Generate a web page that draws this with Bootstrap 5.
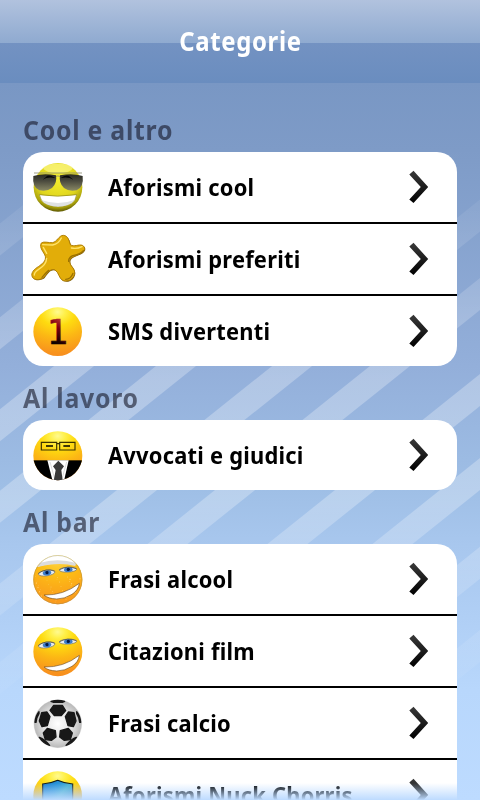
<!DOCTYPE html>
<html lang="it">
<head>
  <meta charset="UTF-8">
  <title>Categorie</title>
  <meta name="viewport" content="width=device-width, initial-scale=1">
  <link href="https://cdn.jsdelivr.net/npm/bootstrap@5.3.3/dist/css/bootstrap.min.css" rel="stylesheet">
  <style>
    body {
      font-family: "Noto Sans", "Open Sans", sans-serif;
      background: linear-gradient(#7997c3 0, #7997c4 83px, #7e9bc7 150px, #93afda 366px, #9fbfe6 490px, #a8c7ee 545px, #b8d7fc 690px, #bddbff 800px);
    }
    .stripes {
      z-index: 0;
    }
    .content-layer {
      z-index: 1;
    }
    .top-bar {
      height: 83px;
      background: linear-gradient(#b1c2de 0, #8faad0 43px, #7392c2 43px, #6a8dbf 83px);
    }
    .top-bar h1 {
      font-size: 26px;
      line-height: 36px;
      padding-bottom: 2px;
      letter-spacing: .7px;
      transform: scaleX(.92);
    }
    .group-title {
      font-size: 27px;
      line-height: 36px;
      color: rgba(20, 22, 38, .6);
      margin: 0 23px;
      padding: 14px 0 4px;
      letter-spacing: .8px;
      transform: scaleX(.92);
      transform-origin: left;
    }
    .first-title {
      padding-top: 29px;
    }
    .menu-box {
      border-radius: 20px;
      margin: 0 23px;
    }
    .menu-row {
      height: 72px;
      border-bottom: 2px solid #000;
      font-size: 24px;
    }
    .menu-row:last-child {
      height: 70px;
      border-bottom: 0;
    }
    .row-label {
      letter-spacing: .25px;
      transform: scaleX(.912);
      transform-origin: left;
    }
    .menu-icon {
      width: 72px;
      height: 70px;
      margin-right: 13px;
    }
    .arrow {
      width: 20px;
      height: 34px;
      margin-right: 28px;
    }
    .bottom-fade {
      height: 17px;
      z-index: 2;
      background: linear-gradient(rgba(189, 219, 255, 0), #bddbff);
    }
  </style>
</head>
<body class="vh-100 overflow-hidden position-relative">

  <!-- Gradienti e simboli comuni -->
  <svg width="0" height="0" class="position-absolute">
    <defs>
      <radialGradient id="gold" gradientUnits="userSpaceOnUse" cx="113" cy="48" r="138" gradientTransform="translate(113 48) scale(1.25 1) translate(-113 -48)">
        <stop offset="0" stop-color="#fffa90"/>
        <stop offset=".13" stop-color="#fff04a"/>
        <stop offset=".3" stop-color="#fedb10"/>
        <stop offset=".55" stop-color="#fcb814"/>
        <stop offset=".88" stop-color="#f8931d"/>
        <stop offset="1" stop-color="#f68b1f"/>
      </radialGradient>
      <radialGradient id="lemon" cx=".5" cy=".3" r=".72">
        <stop offset="0" stop-color="#f4ee30"/>
        <stop offset=".62" stop-color="#dfd51c"/>
        <stop offset=".85" stop-color="#aaa20c"/>
        <stop offset="1" stop-color="#4c4700"/>
      </radialGradient>
      <linearGradient id="lens" x1="0" y1="0" x2="0" y2="1">
        <stop offset="0" stop-color="#2a2a22"/>
        <stop offset=".4" stop-color="#4a4a3e"/>
        <stop offset="1" stop-color="#8a8966"/>
      </linearGradient>
      <linearGradient id="oneFill" x1="1" y1="0" x2=".6" y2="1">
        <stop offset="0" stop-color="#ee8a55"/>
        <stop offset=".25" stop-color="#c23a30"/>
        <stop offset=".5" stop-color="#7a0010"/>
        <stop offset=".8" stop-color="#1b0000"/>
        <stop offset="1" stop-color="#000"/>
      </linearGradient>
      <radialGradient id="ballFill" cx=".5" cy=".5" r=".52">
        <stop offset="0" stop-color="#fff"/>
        <stop offset=".6" stop-color="#e2e2e2"/>
        <stop offset="1" stop-color="#b4b4b4"/>
      </radialGradient>
      <linearGradient id="shieldFill" x1="0" y1="0" x2="1" y2="1">
        <stop offset="0" stop-color="#1377cf"/>
        <stop offset=".35" stop-color="#2c98d8"/>
        <stop offset=".5" stop-color="#43b0cf"/>
        <stop offset="1" stop-color="#1b66b5"/>
      </linearGradient>
      <linearGradient id="arrowFill" x1="0" y1="0" x2="0" y2="1">
        <stop offset="0" stop-color="#3a3a3a"/>
        <stop offset="1" stop-color="#000"/>
      </linearGradient>
      <filter id="soft"><feGaussianBlur stdDeviation="2.2"/></filter>
      <clipPath id="faceClip"><circle cx="113.500" cy="107" r="73.500"/></clipPath>
      <symbol id="arrow" viewBox="0 0 20 34">
        <path d="M.3 4.500 4.500.8 19.200 17 4.500 33 .3 29.500 11.800 17Z" fill="url(#arrowFill)"/>
      </symbol>
      <symbol id="eyes" viewBox="9 0 216 210">
        <g transform="rotate(-8 80 87)">
          <ellipse cx="80" cy="87" rx="25" ry="8.500" fill="#e9edf0" stroke="#77776a" stroke-width="2"/>
          <ellipse cx="81" cy="87" rx="13" ry="7.500" fill="#3c7dcb"/>
          <ellipse cx="81" cy="86" rx="5" ry="5" fill="#031a4a"/>
          <path d="M55 85q24-14 50 0" fill="none" stroke="#444" stroke-width="2"/>
        </g>
        <g transform="rotate(-3 144 77)">
          <ellipse cx="144" cy="77" rx="26" ry="7.500" fill="#e9edf0" stroke="#77776a" stroke-width="2"/>
          <ellipse cx="145" cy="77" rx="13" ry="7" fill="#3c7dcb"/>
          <ellipse cx="145" cy="76" rx="5" ry="5" fill="#031a4a"/>
          <path d="M118 76q26-13 52 0" fill="none" stroke="#444" stroke-width="2"/>
        </g>
      </symbol>
      <symbol id="grin" viewBox="9 0 216 210">
        <path d="M72 153q58 2 106-35q-2 20-22 33q-22 14-46 14q-26-1-38-12Z" fill="#fff" stroke="#76501f" stroke-width="2"/>
      </symbol>
    </defs>
  </svg>

  <!-- Strisce diagonali dello sfondo -->
  <svg class="stripes position-absolute top-0 start-0" width="480" height="800" viewBox="0 0 480 800">
    <defs>
      <linearGradient id="fadeStripes" gradientUnits="userSpaceOnUse" x1="0" y1="150" x2="0" y2="720">
        <stop offset="0" stop-color="#fff" stop-opacity="0"/>
        <stop offset=".2" stop-color="#fff" stop-opacity=".13"/>
        <stop offset=".4" stop-color="#fff" stop-opacity=".27"/>
        <stop offset=".62" stop-color="#fff" stop-opacity=".27"/>
        <stop offset=".8" stop-color="#fff" stop-opacity=".13"/>
        <stop offset="1" stop-color="#fff" stop-opacity="0"/>
      </linearGradient>
    </defs>
    <g id="stripeGroup" fill="url(#fadeStripes)"></g>
  </svg>

  <div class="content-layer position-relative">
    <!-- Header -->
    <header class="top-bar d-flex align-items-center justify-content-center text-white">
      <h1 class="fw-bold m-0">Categorie</h1>
    </header>

    <main>
      <!-- Cool e altro -->
      <h2 class="group-title first-title fw-bold">Cool e altro</h2>
      <div class="menu-box bg-white text-black overflow-hidden">
        <div class="menu-row d-flex align-items-center fw-bold">
          <svg class="menu-icon" viewBox="9 6 216 210">
            <circle cx="114" cy="112" r="73" fill="url(#lemon)"/>
            <ellipse cx="114" cy="55" rx="43" ry="14" fill="#fffb9a" opacity=".6" filter="url(#soft)"/>
            <path d="M58 134q54 9 112 0q-4 34-56 36q-51-2-56-36Z" fill="#fff" stroke="#8b8520" stroke-width="2"/>
            <path d="M64 150q50 18 100 0q-14 19-50 20q-36-2-50-20Z" fill="#dfe2e2"/>
            <path d="M42 69h144M96 83q17-10 35 0" fill="none" stroke="#8b8b72" stroke-width="2.500"/>
            <g transform="translate(0 2)">
              <path d="M40 76q30-9 68-2q4 24-12 38q-16 12-38 7q-22-9-18-43Z" fill="url(#lens)"/>
              <path d="M188 76q-30-9-68-2q-4 24 12 38q16 12 38 7q22-9 18-43Z" fill="url(#lens)"/>
              <path d="M68 87q15-10 38-5q-13-10-24-7ZM160 87q-15-10-38-5q13-10 24-7Z" fill="#080808"/>
            </g>
          </svg>
          <span class="row-label flex-grow-1">Aforismi cool</span>
          <svg class="arrow"><use href="#arrow"/></svg>
        </div>
        <div class="menu-row d-flex align-items-center fw-bold">
          <svg class="menu-icon" viewBox="9 0 216 210">
            <path d="M64 57C72 51 87 57 97 56C112 54 116 34 130 34C144 35 147 49 151 62C162 70 176 60 187 64C198 70 195 80 184 87C172 95 151 97 149 110C148 126 164 130 164 147C161 166 146 174 130 170C116 165 117 144 105 138C90 132 80 149 72 160C63 168 43 170 37 159C31 147 43 135 55 128C66 120 79 111 76 97C73 86 56 71 64 57Z" fill="#77590c" transform="translate(2 2)"/>
            <path d="M64 57C72 51 87 57 97 56C112 54 116 34 130 34C144 35 147 49 151 62C162 70 176 60 187 64C198 70 195 80 184 87C172 95 151 97 149 110C148 126 164 130 164 147C161 166 146 174 130 170C116 165 117 144 105 138C90 132 80 149 72 160C63 168 43 170 37 159C31 147 43 135 55 128C66 120 79 111 76 97C73 86 56 71 64 57Z" fill="#e2ad09" stroke="#b18008" stroke-width="3"/>
            <path d="M68 62q15 1 30 1q18-3 26-21M154 72q16 4 32-4M80 103q-1 20-24 33q-14 9-13 17M70 70q6 11 10 18" fill="none" stroke="#ffe36b" stroke-width="4" stroke-linecap="round" filter="url(#soft)"/>
            <path d="M190 80q-10 12-32 15q-13 6-12 17M159 148q-6 18-22 18M66 160q12-14 20-21" fill="none" stroke="#9c7205" stroke-width="4" stroke-linecap="round" filter="url(#soft)"/>
          </svg>
          <span class="row-label flex-grow-1">Aforismi preferiti</span>
          <svg class="arrow"><use href="#arrow"/></svg>
        </div>
        <div class="menu-row d-flex align-items-center fw-bold">
          <svg class="menu-icon" viewBox="9 0 216 210">
            <circle cx="113" cy="107" r="73" fill="url(#gold)"/>
            <text class="fw-normal" x="114" y="143" text-anchor="middle" font-family="DejaVu Sans" font-size="101" fill="url(#oneFill)" stroke="url(#oneFill)" stroke-width="2">1</text>
          </svg>
          <span class="row-label flex-grow-1">SMS divertenti</span>
          <svg class="arrow"><use href="#arrow"/></svg>
        </div>
      </div>

      <!-- Al lavoro -->
      <h2 class="group-title fw-bold">Al lavoro</h2>
      <div class="menu-box bg-white text-black overflow-hidden">
        <div class="menu-row d-flex align-items-center fw-bold">
          <svg class="menu-icon" viewBox="9 0 216 210">
            <g clip-path="url(#faceClip)">
              <rect x="38" y="30" width="154" height="154" fill="url(#gold)"/>
              <rect x="38" y="121" width="154" height="62" fill="#000"/>
              <path d="M82 121h64l-14 62H98Z" fill="#fff"/>
              <path d="M90 126l15 54M140 126l-15 54" stroke="#c9c9c9" stroke-width="2"/>
              <path d="M115 122 132 139 124 150 128 183H101L107 150 99 139Z" fill="#393939"/>
            </g>
            <path d="M64 67h46v23H64ZM119 67h46v23h-46ZM110 71h9" fill="none" stroke="#3b3200" stroke-width="3.500"/>
            <path d="M78 78h21M130 78h20" stroke="#000" stroke-width="4"/>
          </svg>
          <span class="row-label flex-grow-1">Avvocati e giudici</span>
          <svg class="arrow"><use href="#arrow"/></svg>
        </div>
      </div>

      <!-- Al bar -->
      <h2 class="group-title fw-bold">Al bar</h2>
      <div class="menu-box bg-white text-black overflow-hidden">
        <div class="menu-row d-flex align-items-center fw-bold">
          <svg class="menu-icon" viewBox="9 0 216 210">
            <g clip-path="url(#faceClip)">
              <rect x="38" y="30" width="154" height="154" fill="url(#gold)"/>
              <rect x="38" y="60" width="154" height="124" fill="#fba51b" opacity=".5"/>
              <path d="M38 30h154v36q-60-19-140 2l-14 0Z" fill="#fff"/>
              <path d="M58 57q55-16 110 0l-2 9q-50-14-113 3Z" fill="#dcdcdc"/>
              <g id="bubbles" fill="#ffdf90"></g>
            </g>
            <circle cx="113.500" cy="107" r="72.500" fill="none" stroke="#9d8a55" stroke-width="1.800" opacity=".7"/>
            <use href="#eyes" x="9" y="0" width="216" height="210"/>
            <use href="#grin" x="9" y="0" width="216" height="210"/>
          </svg>
          <span class="row-label flex-grow-1">Frasi alcool</span>
          <svg class="arrow"><use href="#arrow"/></svg>
        </div>
        <div class="menu-row d-flex align-items-center fw-bold">
          <svg class="menu-icon" viewBox="9 0 216 210">
            <circle cx="113.500" cy="107" r="73.500" fill="url(#gold)"/>
            <use href="#eyes" x="9" y="0" width="216" height="210"/>
            <use href="#grin" x="9" y="0" width="216" height="210"/>
          </svg>
          <span class="row-label flex-grow-1">Citazioni film</span>
          <svg class="arrow"><use href="#arrow"/></svg>
        </div>
        <div class="menu-row d-flex align-items-center fw-bold">
          <svg class="menu-icon" viewBox="9 0 216 210">
            <circle cx="113.500" cy="107.500" r="71.500" fill="url(#ballFill)" stroke="#bbb"/>
            <g fill="#181818" stroke="#181818" stroke-width="4" stroke-linejoin="round">
              <path d="M101 52h26l10 16-13 15h-21L90 67ZM65 74l16-2 9 14-8 27-16 3-8-17ZM162 74l-17-2-9 14 8 27 16 3 8-17ZM82 121l24 7 2 19-14 10-18-2-6-20ZM145 121l-24 7-2 19 14 10 18-2 6-20Z"/>
              <path d="M93 40q20-5 41 0l-7 3h-26ZM45 103q2-21 12-32v6q-7 10-9 26ZM182 103q-2-21-12-32v6q7 10 9 26ZM58 148q14 4 31 24q-18-5-31-24ZM169 148q-14 4-31 24q18-5 31-24Z"/>
            </g>
          </svg>
          <span class="row-label flex-grow-1">Frasi calcio</span>
          <svg class="arrow"><use href="#arrow"/></svg>
        </div>
        <div class="menu-row d-flex align-items-center fw-bold">
          <svg class="menu-icon" viewBox="9 0 216 210">
            <circle cx="113" cy="107" r="73" fill="url(#gold)"/>
            <path d="M68 72q26-2 45-11q19 9 45 11v40q-2 38-45 56q-43-18-45-56Z" fill="url(#shieldFill)" stroke="#111c1d" stroke-width="3.500"/>
          </svg>
          <span class="row-label flex-grow-1">Aforismi Nuck Chorris</span>
          <svg class="arrow"><use href="#arrow"/></svg>
        </div>
      </div>
    </main>
  </div>

  <div class="bottom-fade position-absolute bottom-0 start-0 w-100"></div>

  <script src="https://cdn.jsdelivr.net/npm/bootstrap@5.3.3/dist/js/bootstrap.bundle.min.js"></script>
  <script>
    const svgNs = "http://www.w3.org/2000/svg";

    // Strisce: posizione x del bordo sinistro a y = 366
    const strisce = [-178, -61, 54, 156, 272, 370, 490, 595, 706, 810];
    const gruppo = document.getElementById("stripeGroup");
    strisce.forEach((x) => {
      const p = document.createElementNS(svgNs, "polygon");
      const su = x + 1.25 * 366;
      const giu = x - 1.25 * 434;
      p.setAttribute("points", `${su},0 ${su + 40},0 ${giu + 40},800 ${giu},800`);
      gruppo.appendChild(p);
    });

    // Bollicine della birra
    const bolle = document.getElementById("bubbles");
    for (let i = 0; i < 40; i++) {
      const c = document.createElementNS(svgNs, "circle");
      c.setAttribute("cx", 46 + (i * 47) % 136);
      c.setAttribute("cy", 98 + (i * 31) % 80);
      c.setAttribute("r", 0.8 + (i % 3) * 0.4);
      bolle.appendChild(c);
    }
  </script>
</body>
</html>
